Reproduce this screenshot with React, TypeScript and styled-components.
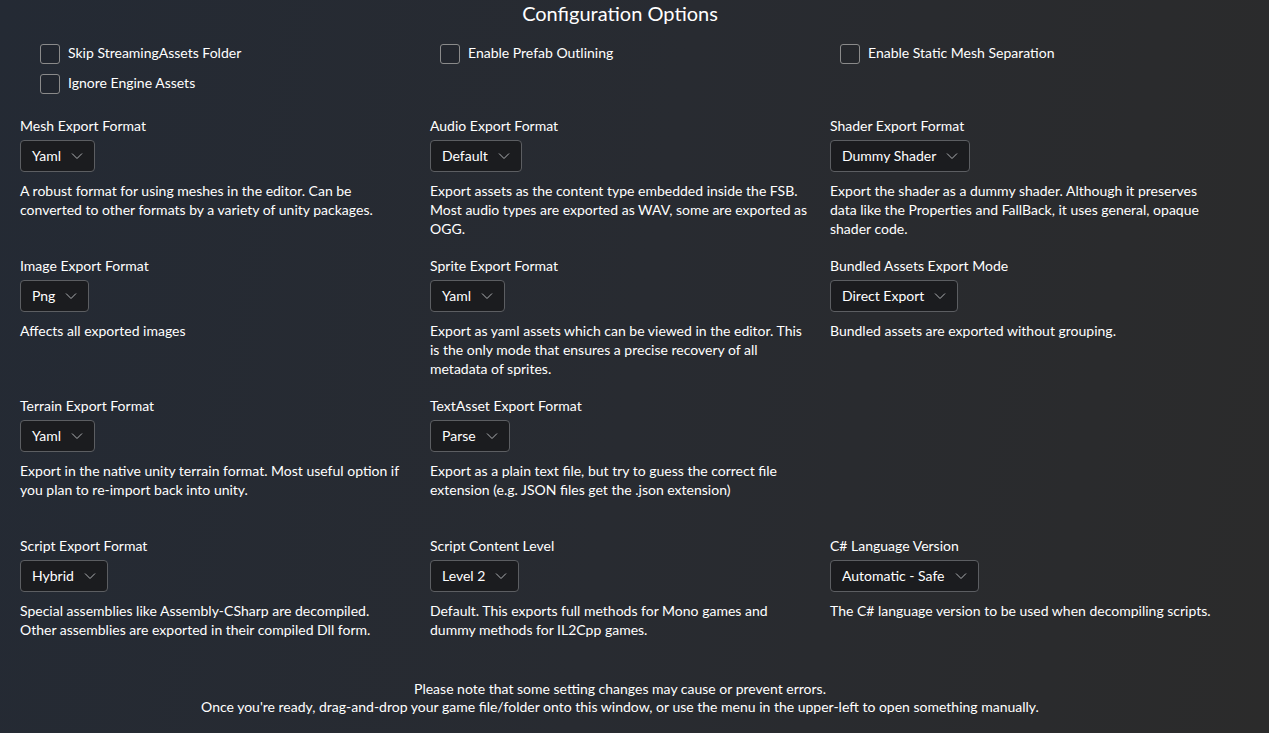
import React from 'react'
import styled, { createGlobalStyle } from 'styled-components'

const GlobalStyle = createGlobalStyle`
  html, body {
    margin: 0;
    padding: 0;
    height: 100%;
  }
  body {
    font-family: 'Segoe UI', Lato, 'Noto Sans', sans-serif;
    color: #ffffff;
    background: #282a2e;
  }
`

const Page = styled.div`
  width: 1269px;
  height: 733px;
  overflow: hidden;
  background: linear-gradient(100deg, #242a34 0%, #282b31 50%, #2b2b2b 100%);
`

const Content = styled.div`
  width: 1240px;
  height: 100%;
  display: flex;
  flex-direction: column;
`

const Title = styled.h1`
  margin: 0;
  height: 28px;
  font-size: 20px;
  font-weight: 400;
  line-height: 26px;
  text-align: center;
`

const CheckGrid = styled.div`
  display: grid;
  grid-template-columns: repeat(3, 400px);
  row-gap: 10px;
  padding: 15px 0 0 40px;
`

const CheckRow = styled.label`
  display: flex;
  align-items: center;
  gap: 8px;
  height: 20px;
  font-size: 14px;
  line-height: 18px;
`

const Box = styled.span`
  width: 18px;
  height: 18px;
  border: 1px solid #8a8a8a;
  border-radius: 3px;
  background: rgba(0, 0, 0, 0.08);
  flex: none;
  margin-top: 1px;
`

const OptionGrid = styled.div`
  display: grid;
  grid-template-columns: 410px 400px 400px;
  grid-auto-rows: 140px;
  padding: 24px 0 0 20px;
`

const Option = styled.div`
  display: flex;
  flex-direction: column;
  align-items: flex-start;
`

const Label = styled.div`
  font-size: 14px;
  line-height: 18px;
  margin-bottom: 5px;
`

const Select = styled.div`
  display: flex;
  align-items: center;
  gap: 10px;
  padding: 0 11px 1px 11px;
  box-sizing: border-box;
  height: 32px;
  background: #1b1c1f;
  border: 1px solid #5c5e62;
  border-radius: 4px;
  font-size: 14px;
`

const Description = styled.p`
  margin: 9px 0 0;
  max-width: 382px;
  font-size: 14px;
  line-height: 19px;
`

const Footer = styled.footer`
  margin-top: auto;
  padding-bottom: 17px;
  text-align: center;
  font-size: 14px;
  line-height: 18px;
`

const Chevron = () => (
  <svg width="12" height="8" viewBox="0 0 12 8" fill="none">
    <path d="M1 1.5l5 5 5-5" stroke="#aeb0b3" strokeWidth="1" />
  </svg>
)

type OptionData = { label: string; value: string; text: string } | null

const options: OptionData[] = [
  { label: 'Mesh Export Format', value: 'Yaml', text: 'A robust format for using meshes in the editor. Can be converted to other formats by a variety of unity packages.' },
  { label: 'Audio Export Format', value: 'Default', text: 'Export assets as the content type embedded inside the FSB. Most audio types are exported as WAV, some are exported as OGG.' },
  { label: 'Shader Export Format', value: 'Dummy Shader', text: 'Export the shader as a dummy shader. Although it preserves data like the Properties and FallBack, it uses general, opaque shader code.' },
  { label: 'Image Export Format', value: 'Png', text: 'Affects all exported images' },
  { label: 'Sprite Export Format', value: 'Yaml', text: 'Export as yaml assets which can be viewed in the editor. This is the only mode that ensures a precise recovery of all metadata of sprites.' },
  { label: 'Bundled Assets Export Mode', value: 'Direct Export', text: 'Bundled assets are exported without grouping.' },
  { label: 'Terrain Export Format', value: 'Yaml', text: 'Export in the native unity terrain format. Most useful option if you plan to re-import back into unity.' },
  { label: 'TextAsset Export Format', value: 'Parse', text: 'Export as a plain text file, but try to guess the correct file extension (e.g. JSON files get the .json extension)' },
  null,
  { label: 'Script Export Format', value: 'Hybrid', text: 'Special assemblies like Assembly-CSharp are decompiled. Other assemblies are exported in their compiled Dll form.' },
  { label: 'Script Content Level', value: 'Level 2', text: 'Default. This exports full methods for Mono games and dummy methods for IL2Cpp games.' },
  { label: 'C# Language Version', value: 'Automatic - Safe', text: 'The C# language version to be used when decompiling scripts.' },
]

const checks = ['Skip StreamingAssets Folder', 'Enable Prefab Outlining', 'Enable Static Mesh Separation', 'Ignore Engine Assets']

export default function App() {
  return (
    <Page>
      <GlobalStyle />
      <Content>
        <Title>Configuration Options</Title>
        <CheckGrid>
          {checks.map((c) => (
            <CheckRow key={c}>
              <Box />
              {c}
            </CheckRow>
          ))}
        </CheckGrid>
        <OptionGrid>
          {options.map((o, i) =>
            o ? (
              <Option key={o.label}>
                <Label>{o.label}</Label>
                <Select>
                  {o.value}
                  <Chevron />
                </Select>
                <Description>{o.text}</Description>
              </Option>
            ) : (
              <div key={i} />
            )
          )}
        </OptionGrid>
        <Footer>
          Please note that some setting changes may cause or prevent errors.
          <br />
          Once you're ready, drag-and-drop your game file/folder onto this window, or use the menu in the upper-left to open something manually.
        </Footer>
      </Content>
    </Page>
  )
}
